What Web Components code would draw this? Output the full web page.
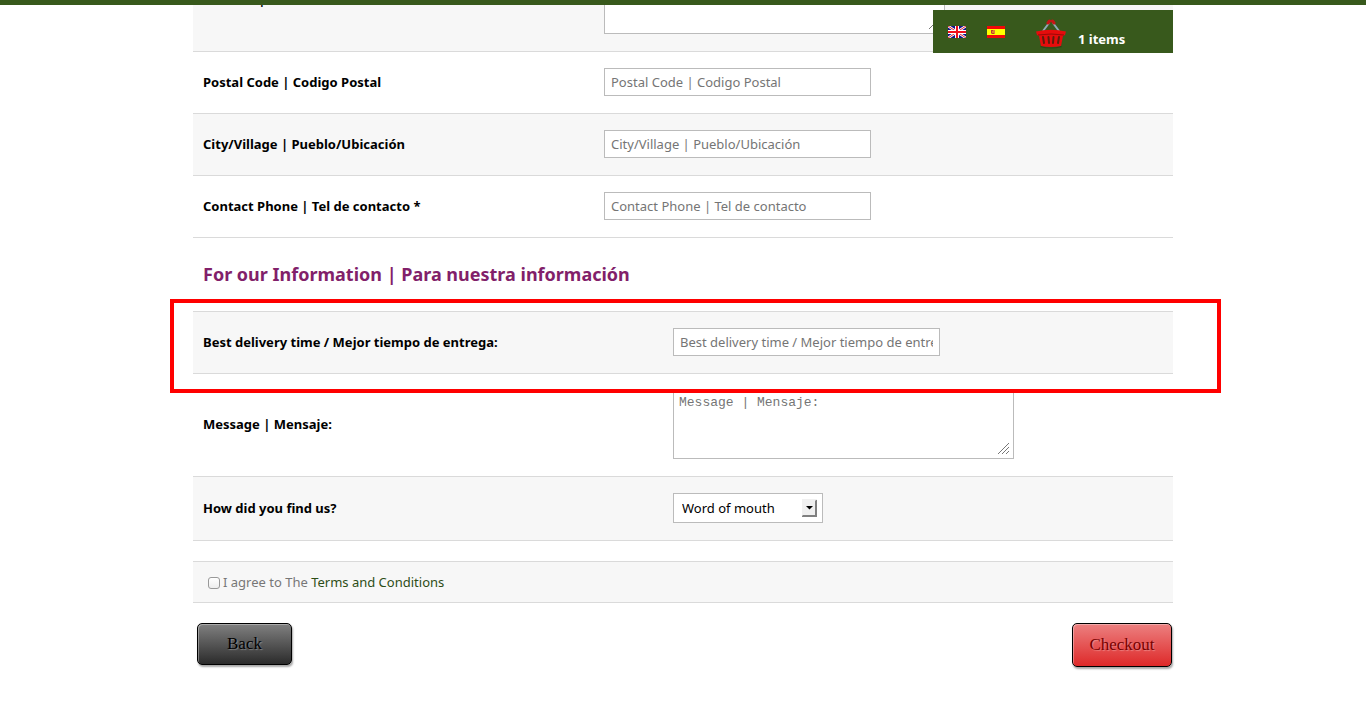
<!DOCTYPE html>
<html lang="en">
<head>
<meta charset="utf-8">
<meta name="viewport" content="width=device-width, initial-scale=1">
<title>Checkout</title>
<style>
  body { margin: 0; background: #fff; color: #000; font: 13px/20px "Noto Sans", "Open Sans", sans-serif; }
</style>
</head>
<body>
<checkout-page></checkout-page>

<script>
const define = (name, html, setup) => customElements.define(name, class extends HTMLElement {
  constructor() {
    super();
    const t = document.createElement('template');
    t.innerHTML = html;
    this.attachShadow({ mode: 'open' }).append(t.content.cloneNode(true));
  }
  connectedCallback() { if (setup) setup(this, this.shadowRoot); }
});

define('form-row', `
<style>
  :host { display: grid; grid-template-columns: var(--label-col, 401px) 1fr; align-items: center; box-sizing: border-box;
    padding: 16px 10px; border-bottom: 1px solid #dadada; background: #fff; }
  :host([shaded]) { background: #f7f7f7; }
  label { font-weight: 700; padding-bottom: 2px; }
  .control { display: flex; padding-bottom: 1px; }
  input, textarea, select { box-sizing: border-box; margin: 0; border: 1px solid #bbb; border-radius: 0; background: #fff; outline: 0; }
  input { width: 267px; max-width: 100%; height: 28px; padding: 0 6px; font: inherit; }
  .area { display: grid; width: 341px; max-width: 100%; }
  .area > * { grid-area: 1 / 1; }
  textarea { width: 100%; height: 69px; padding: 4px 5px; font: 13px/15px "Liberation Mono", monospace; resize: none; }
  .area svg { place-self: end; margin: 0 5px 5px 0; pointer-events: none; }
  ::placeholder { color: #757575; opacity: 1; }
  .pick { display: grid; width: 150px; align-items: center; }
  .pick > * { grid-area: 1 / 1; }
  select { appearance: none; width: 100%; height: 30px; padding: 0 24px 0 8px; font: inherit; color: #000; }
  .pick svg { justify-self: end; margin-right: 6px; pointer-events: none; }
</style>
<label for="field"></label>
<div class="control"></div>`, (host, root) => {
  const label = host.getAttribute('label');
  const hint = host.getAttribute('hint') || label;
  const kind = host.getAttribute('kind') || 'text';
  root.querySelector('label').textContent = label;
  const box = root.querySelector('.control');
  if (kind === 'text') box.innerHTML = '<input id="field" type="text">';
  if (kind === 'area') box.innerHTML = `<div class="area"><textarea id="field"></textarea>
    <svg width="12" height="12" viewBox="0 0 12 12" aria-hidden="true"><path stroke="#777" d="M1 12L12 1M5 12l7-7M9 12l3-3"/></svg></div>`;
  if (kind === 'select') box.innerHTML = `<div class="pick"><select id="field"><option>${host.getAttribute('value')}</option></select>
    <svg width="15" height="18" viewBox="0 0 15 18" aria-hidden="true"><path fill="#f0f0f0" d="M0 0h15v18H0z"/><path fill="#808080" d="M14 1h1v17H0v-1l1-1h12V2z"/><path d="M4 7h7L7.500 10.500z"/></svg></div>`;
  if (kind !== 'select') root.getElementById('field').placeholder = hint;
});

define('site-bar', `
<style>
  :host { display: block; position: fixed; inset: 0 0 auto; z-index: 5; border-top: 5px solid #38591c; }
  .wrap { max-width: 980px; margin: 0 auto; display: flex; justify-content: flex-end; }
  nav { box-sizing: border-box; width: 240px; height: 43px; margin-top: 5px; padding: 0 15px; background: #38591c; color: #fff;
    display: flex; align-items: flex-start; }
  a { color: #fff; text-decoration: none; display: flex; }
  .flag { padding-top: 16px; margin-right: 21px; }
  .cart { margin-left: 10px; gap: 12px; padding-top: 9px; font-weight: 700; }
  .cart span { padding-top: 10px; }
</style>
<div class="wrap"><nav>
  <a class="flag" href="#" aria-label="English"><svg width="18" height="12" viewBox="0 0 18 12">
    <path fill="#12128c" d="M0 0h18v12H0z"/><path stroke="#fff" stroke-width="2.6" d="M0 0l18 12M18 0L0 12"/><path stroke="#e3212c" stroke-width="1" d="M0 0l18 12M18 0L0 12"/>
    <path fill="#fff" d="M7 0h4v12H7zM0 4h18v4H0z"/><path fill="#f0101c" d="M8 0h2v12H8zM0 5h18v2H0z"/></svg></a>
  <a class="flag" href="#" aria-label="Español"><svg width="18" height="12" viewBox="0 0 18 12">
    <path fill="#f00808" d="M0 0h18v12H0z"/><path fill="#ff0" d="M0 3h18v6H0z"/><path fill="#e08030" d="M4 4h4v4H4z"/><path fill="#c03c28" d="M4 4h2v1H5v2h2v1H5V7H4z"/></svg></a>
  <a class="cart" href="#"><svg width="30" height="30" viewBox="0 0 30 30" fill="none">
    <path fill="#2c4316" d="M5 27q10 3 20 0l1 1q-11 3-22 0z"/>
    <path stroke="#8fa9b8" stroke-width="2" d="M7 12L13 4M23 12L17 4"/><path stroke="#c81414" stroke-width="3" stroke-linecap="round" d="M12 4l1.500-2M18 4l-1.500-2"/>
    <path fill="#e60c0c" d="M0 12.500Q15 9 30 12.500L29 16l-2 1-2 10q-10 2-20 0L3 17l-2-1z"/>
    <path stroke="#9c0808" d="M2 16q13-2 26 0"/><path stroke="#5e1c0c" stroke-width="2" stroke-linecap="round" d="M7 18l1 6M12.500 18l.5 6M17.500 18l-.5 6M23 18l-1 6"/></svg>
    <span>1 items</span></a>
</nav></div>`);

define('action-button', `
<style>
  :host { display: block; }
  button { box-sizing: border-box; height: 42px; min-width: 95px; padding: 0 15px; border: 1px solid #000; border-radius: 5px;
    background: linear-gradient(#808080, #2b2b2b); color: #000; font: 17px/20px "Liberation Serif", serif;
    text-shadow: 1px 1px 1px rgba(255,255,255,.3); box-shadow: inset 1px 1px 0 rgba(255,255,255,.35), 1px 2px 2px rgba(0,0,0,.35); }
  :host([primary]) button { height: 44px; min-width: 100px; background: linear-gradient(#ec8080, #de2929); color: #700; }
</style>
<button type="button"><slot></slot></button>`);

define('terms-row', `
<style>
  :host { display: flex; align-items: center; box-sizing: border-box; height: 42px; padding: 0 15px; margin-top: 20px;
    background: #f7f7f7; border: solid #dadada; border-width: 1px 0; color: #777; }
  input { appearance: none; box-sizing: border-box; width: 12px; height: 12px; margin: 2px 3px 0 0; border: 1px solid #999; border-radius: 3px; background: linear-gradient(#fff, #eee); }
  a { color: #2d4d16; text-decoration: none; }
</style>
<input type="checkbox" id="agree"><label for="agree">I agree to The <a href="#">Terms and Conditions</a></label>`);

define('checkout-page', `
<style>
  :host { display: block; overflow: hidden; }
  main { max-width: 980px; margin: 0 auto; }
  .clip { display: flex; flex-direction: column; justify-content: flex-end; height: 52px; overflow: hidden; }
  h2 { margin: 0; padding: 21px 10px 22px; font-size: 18px; line-height: 30px; font-weight: 700; color: #821f6a; }
  .info { --label-col: 470px; border-top: 1px solid #dadada; }
  .focus { position: relative; }
  .focus::after { content: ""; position: absolute; inset: -13px -48px -19px -23px; border: 4px solid #f00; pointer-events: none; z-index: 2; }
  .actions { display: flex; justify-content: space-between; align-items: flex-start; padding: 20px 1px 44px 4px; }
</style>
<site-bar></site-bar>
<main>
  <div class="clip"><form-row shaded kind="area" label="Address | Direccion"></form-row></div>
  <form-row label="Postal Code | Codigo Postal"></form-row>
  <form-row shaded label="City/Village | Pueblo/Ubicación"></form-row>
  <form-row label="Contact Phone | Tel de contacto *" hint="Contact Phone | Tel de contacto"></form-row>
  <h2>For our Information | Para nuestra información</h2>
  <div class="info">
    <div class="focus"><form-row shaded label="Best delivery time / Mejor tiempo de entrega:"></form-row></div>
    <form-row kind="area" label="Message | Mensaje:"></form-row>
    <form-row shaded kind="select" label="How did you find us?" value="Word of mouth"></form-row>
  </div>
  <terms-row></terms-row>
  <div class="actions"><action-button>Back</action-button><action-button primary>Checkout</action-button></div>
</main>`);
</script>
</body>
</html>
